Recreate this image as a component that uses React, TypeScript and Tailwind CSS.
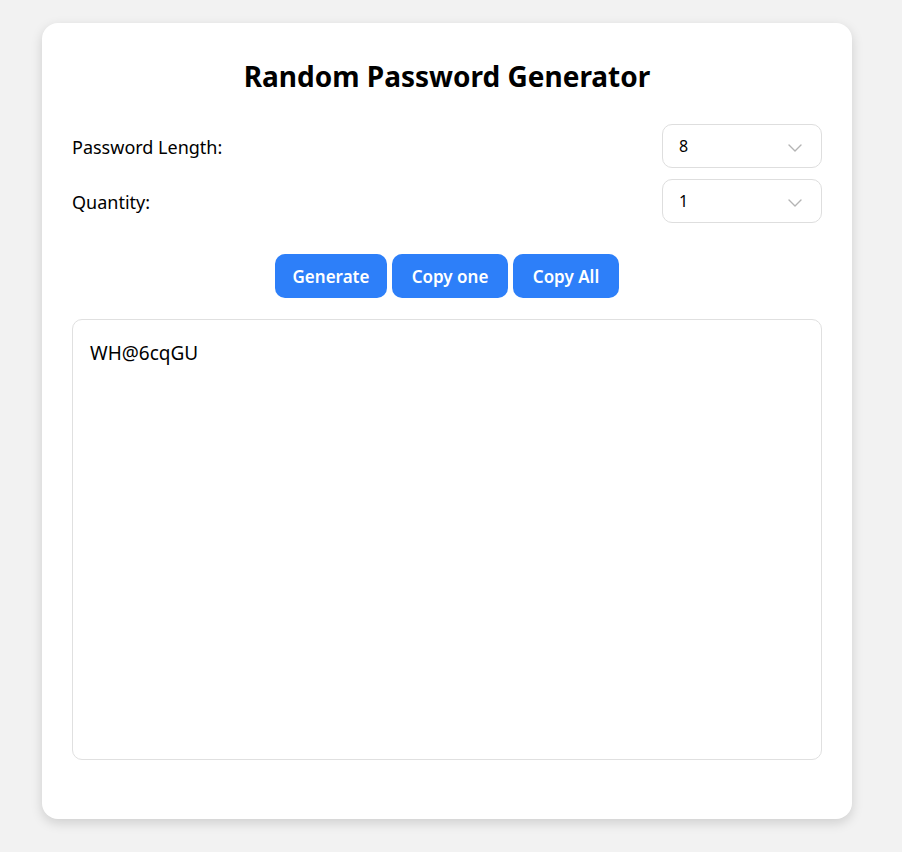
import React, { useState } from "react";

const font = { fontFamily: '"Segoe UI", "Noto Sans", "Open Sans", sans-serif' };

const SelectBox = ({ value }: { value: string }) => (
  <div className="relative w-[160px] h-[44px] rounded-[10px] border border-[#dedede] bg-white flex items-center pl-4 pr-3 text-[16px] text-black">
    <span>{value}</span>
    <svg className="absolute right-[19px] top-[19px]" width="14" height="8" viewBox="0 0 14 8" fill="none">
      <polyline points="1,1 7,7 13,1" stroke="#b4b4b4" strokeWidth="1.4" strokeLinecap="round" strokeLinejoin="round" />
    </svg>
  </div>
);

export default function App() {
  const [output] = useState("WH@6cqGU");
  return (
    <div className="min-h-[852px] bg-[#f2f2f2] pt-[23px] pl-[42px]" style={font}>
      <div className="w-[810px] h-[796px] bg-white rounded-[16px] shadow-[0_4px_12px_rgba(0,0,0,0.15)] px-[30px] pt-[34px]">
        <h1 className="text-center text-[28px] font-bold text-black leading-[38px]">Random Password Generator</h1>

        <div className="mt-[29px] flex flex-col gap-[11px]">
          <div className="flex items-center justify-between">
            <span className="text-[18px] text-black pt-[2px]">Password Length:</span>
            <SelectBox value="8" />
          </div>
          <div className="flex items-center justify-between">
            <span className="text-[18px] text-black pt-[2px]">Quantity:</span>
            <SelectBox value="1" />
          </div>
        </div>

        <div className="mt-[31px] flex justify-center gap-[5px]">
          <button className="h-[44px] w-[112px] rounded-[10px] bg-[#2d7ff9] text-white font-semibold text-[17px] pt-[2px]">Generate</button>
          <button className="h-[44px] w-[116px] rounded-[10px] bg-[#2d7ff9] text-white font-semibold text-[17px] pt-[2px]">Copy one</button>
          <button className="h-[44px] w-[106px] rounded-[10px] bg-[#2d7ff9] text-white font-semibold text-[17px] pt-[2px]">Copy All</button>
        </div>

        <div className="mt-[21px] h-[441px] rounded-[10px] border border-[#e0e0e0] px-[17px] py-[19px] text-[19px] leading-[28px] text-black">
          {output}
        </div>
      </div>
    </div>
  );
}
